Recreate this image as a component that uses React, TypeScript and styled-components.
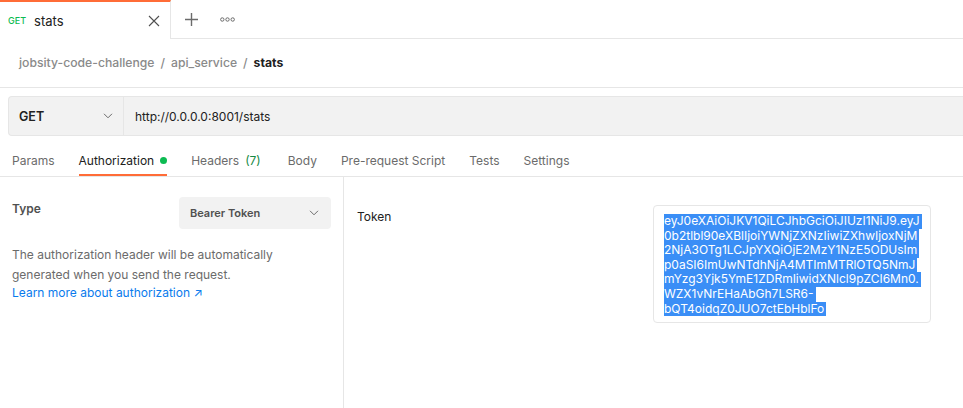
import React from 'react';
import styled, { createGlobalStyle } from 'styled-components';

const Global = createGlobalStyle`
  html, body { margin: 0; padding: 0; background: #fff; }
  body { font-family: Inter, "Noto Sans", sans-serif; color: #212121; }
  #root { width: 963px; height: 408px; overflow: hidden; }
`;

const Page = styled.div`
  display: flex;
  flex-direction: column;
  height: 408px;
  overflow: hidden;
`;

/* ── request tab strip ── */

const TabStrip = styled.div`
  display: flex;
  height: 39px;
`;

const RequestTab = styled.div`
  width: 171px;
  border-top: 2px solid #ff6c37;
  border-right: 1px solid #e6e6e6;
  display: flex;
  align-items: center;
  padding: 0 10px 0 8px;
  box-sizing: border-box;
`;

const MethodTag = styled.span`
  font-size: 9px;
  font-weight: 500;
  color: #0cbb52;
  margin-right: 8px;
`;

const TabTitle = styled.span`
  font-size: 13px;
  flex: 1;
  color: #212121;
`;

const StripFill = styled.div`
  flex: 1;
  display: flex;
  align-items: center;
  border-bottom: 1px solid #e6e6e6;
  padding-left: 14px;
  gap: 22px;
`;

const IconBtn = styled.span`
  display: inline-flex;
  align-items: center;
  justify-content: center;
  color: #6b6b6b;
`;

/* ── breadcrumb ── */

const Crumbs = styled.div`
  height: 49px;
  box-sizing: border-box;
  border-bottom: 1px solid #e6e6e6;
  display: flex;
  align-items: center;
  padding: 0 19px 1px;
  font-size: 12.2px;
  gap: 6px;
`;

const Crumb = styled.span<{ $current?: boolean }>`
  color: ${(p) => (p.$current ? '#212121' : '#8a8a8a')};
  font-weight: ${(p) => (p.$current ? 700 : 500)};
`;

/* ── url bar ── */

const UrlRow = styled.div`
  padding: 8px 0 0 8px;
  display: flex;
`;

const UrlBar = styled.div`
  flex: 1;
  height: 40px;
  box-sizing: border-box;
  background: #f2f2f2;
  border: 1px solid #e6e6e6;
  border-right: none;
  border-radius: 4px 0 0 4px;
  display: flex;
  align-items: center;
`;

const MethodSelect = styled.div`
  width: 115px;
  height: 100%;
  box-sizing: border-box;
  border-right: 1px solid #e6e6e6;
  display: flex;
  align-items: center;
  justify-content: space-between;
  padding: 0 10px;
  font-size: 12.5px;
  font-weight: 600;
  color: #212121;
`;

const UrlText = styled.div`
  padding-left: 11px;
  font-size: 12px;
  color: #212121;
`;

/* ── section tabs ── */

const SectionTabs = styled.div`
  margin-top: 8px;
  height: 33px;
  box-sizing: border-box;
  border-bottom: 1px solid #e6e6e6;
  display: flex;
  padding-left: 12px;
  gap: 24px;
`;

const SectionTab = styled.div<{ $active?: boolean }>`
  height: 32px;
  display: flex;
  align-items: center;
  gap: 6px;
  font-size: 12px;
  color: ${(p) => (p.$active ? '#212121' : '#6b6b6b')};
  box-sizing: border-box;
  border-bottom: 2px solid ${(p) => (p.$active ? '#ff6c37' : 'transparent')};
  padding-top: 2px;
`;

const Dot = styled.span`
  width: 7px;
  height: 7px;
  border-radius: 50%;
  background: #0cbb52;
`;

const Count = styled.span`
  color: #168a45;
  margin-left: 0;
  margin-right: 3px;
`;

/* ── body ── */

const Body = styled.div`
  flex: 1;
  display: flex;
`;

const LeftPane = styled.div`
  width: 344px;
  box-sizing: border-box;
  border-right: 1px solid #e6e6e6;
  padding: 20px 12px 0 12px;
`;

const TypeRow = styled.div`
  display: flex;
  justify-content: space-between;
  align-items: flex-start;
`;

const FieldLabel = styled.div<{ $bold?: boolean }>`
  font-size: 12px;
  line-height: 24px;
  font-weight: ${(p) => (p.$bold ? 600 : 400)};
  color: ${(p) => (p.$bold ? '#505050' : '#212121')};
`;

const Select = styled.div`
  width: 152px;
  height: 32px;
  box-sizing: border-box;
  background: #f2f2f2;
  border-radius: 4px;
  display: flex;
  align-items: center;
  justify-content: space-between;
  padding: 0 12px 0 11px;
  font-size: 11px;
  font-weight: 600;
  color: #505050;
`;

const Help = styled.p`
  margin: 16px 0 0;
  font-size: 12px;
  line-height: 20px;
  color: #6b6b6b;
`;

const HelpLink = styled.a`
  display: block;
  font-size: 12px;
  line-height: 16px;
  color: #097bed;
  text-decoration: none;
`;

const RightPane = styled.div`
  flex: 1;
  display: flex;
  align-items: flex-start;
  padding: 28px 32px 0 13px;
`;

const TokenBox = styled.div`
  margin-left: auto;
  width: 278px;
  box-sizing: border-box;
  border: 1px solid #e6e6e6;
  border-radius: 4px;
  padding: 8px 10px 6px 10px;
`;

const TokenLine = styled.div`
  width: fit-content;
  height: 14.6px;
  line-height: 14.6px;
  padding-right: 2px;
  font-size: 12px;
  color: #fff;
  background: #3a8ef6;
  white-space: nowrap;
`;

const Chevron = () => (
  <svg width="10" height="6" viewBox="0 0 10 6" fill="none" stroke="#6b6b6b" strokeWidth="1">
    <path d="M1 0.8 L5 4.8 L9 0.8" />
  </svg>
);

const tokenLines = [
  'eyJ0eXAiOiJKV1QiLCJhbGciOiJIUzI1NiJ9.eyJ',
  '0b2tlbl90eXBlIjoiYWNjZXNzIiwiZXhwIjoxNjM',
  '2NjA3OTg1LCJpYXQiOjE2MzY1NzE5ODUsIm',
  'p0aSI6ImUwNTdhNjA4MTImMTRlOTQ5NmJ',
  'mYzg3Yjk5YmE1ZDRmIiwidXNlcl9pZCI6Mn0.',
  'WZX1vNrEHaAbGh7LSR6-',
  'bQT4oidqZ0JUO7ctEbHblFo',
];

export default function App() {
  return (
    <Page>
      <Global />
      <TabStrip>
        <RequestTab>
          <MethodTag>GET</MethodTag>
          <TabTitle>stats</TabTitle>
          <IconBtn>
            <svg width="12" height="12" viewBox="0 0 12 12" stroke="#505050" strokeWidth="1.1">
              <path d="M1 1 L11 11 M11 1 L1 11" />
            </svg>
          </IconBtn>
        </RequestTab>
        <StripFill>
          <IconBtn>
            <svg width="13" height="13" viewBox="0 0 13 13" stroke="#6b6b6b" strokeWidth="1.4">
              <path d="M6.5 0 V13 M0 6.5 H13" />
            </svg>
          </IconBtn>
          <IconBtn>
            <svg width="15" height="5" viewBox="0 0 15 5" fill="none" stroke="#6b6b6b" strokeWidth="1">
              <circle cx="2.3" cy="2.5" r="1.7" />
              <circle cx="7.5" cy="2.5" r="1.7" />
              <circle cx="12.7" cy="2.5" r="1.7" />
            </svg>
          </IconBtn>
        </StripFill>
      </TabStrip>

      <Crumbs>
        <Crumb>jobsity-code-challenge</Crumb>
        <Crumb>/</Crumb>
        <Crumb>api_service</Crumb>
        <Crumb>/</Crumb>
        <Crumb $current>stats</Crumb>
      </Crumbs>

      <UrlRow>
        <UrlBar>
          <MethodSelect>
            <span>GET</span>
            <Chevron />
          </MethodSelect>
          <UrlText>http://0.0.0.0:8001/stats</UrlText>
        </UrlBar>
      </UrlRow>

      <SectionTabs>
        <SectionTab>Params</SectionTab>
        <SectionTab $active>
          Authorization <Dot />
        </SectionTab>
        <SectionTab>
          Headers <Count>(7)</Count>
        </SectionTab>
        <SectionTab>Body</SectionTab>
        <SectionTab>Pre-request Script</SectionTab>
        <SectionTab>Tests</SectionTab>
        <SectionTab>Settings</SectionTab>
      </SectionTabs>

      <Body>
        <LeftPane>
          <TypeRow>
            <FieldLabel $bold>Type</FieldLabel>
            <Select>
              <span>Bearer Token</span>
              <Chevron />
            </Select>
          </TypeRow>
          <Help>
            The authorization header will be automatically generated when you send the request.
          </Help>
          <HelpLink href="#">Learn more about authorization ↗</HelpLink>
        </LeftPane>
        <RightPane>
          <FieldLabel>Token</FieldLabel>
          <TokenBox>
            {tokenLines.map((l) => (
              <TokenLine key={l}>{l}</TokenLine>
            ))}
          </TokenBox>
        </RightPane>
      </Body>
    </Page>
  );
}
